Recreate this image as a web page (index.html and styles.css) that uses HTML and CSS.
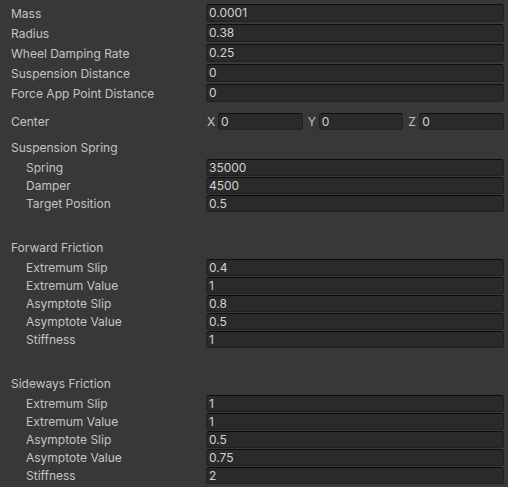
FILE: index.html
```html
<!DOCTYPE html>
<html>
<head>
<meta charset="utf-8">
<link rel="stylesheet" href="styles.css">
</head>
<body>
<div class="inspector">
  <div class="group top">
    <div class="row"><span class="label">Mass</span><div class="field">0.0001</div></div>
    <div class="row"><span class="label">Radius</span><div class="field">0.38</div></div>
    <div class="row"><span class="label">Wheel Damping Rate</span><div class="field">0.25</div></div>
    <div class="row"><span class="label">Suspension Distance</span><div class="field">0</div></div>
    <div class="row"><span class="label">Force App Point Distance</span><div class="field">0</div></div>
  </div>

  <div class="row vec-row">
    <span class="label">Center</span>
    <div class="vector">
      <div class="comp"><span class="axis">X</span><div class="field">0</div></div>
      <div class="comp"><span class="axis">Y</span><div class="field">0</div></div>
      <div class="comp"><span class="axis">Z</span><div class="field">0</div></div>
    </div>
  </div>

  <div class="section spring">
    <div class="header">Suspension Spring</div>
    <div class="sub"><span class="label">Spring</span><div class="field">35000</div></div>
    <div class="sub"><span class="label">Damper</span><div class="field">4500</div></div>
    <div class="sub"><span class="label">Target Position</span><div class="field">0.5</div></div>
  </div>

  <div class="section friction">
    <div class="header">Forward Friction</div>
    <div class="sub"><span class="label">Extremum Slip</span><div class="field">0.4</div></div>
    <div class="sub"><span class="label">Extremum Value</span><div class="field">1</div></div>
    <div class="sub"><span class="label">Asymptote Slip</span><div class="field">0.8</div></div>
    <div class="sub"><span class="label">Asymptote Value</span><div class="field">0.5</div></div>
    <div class="sub"><span class="label">Stiffness</span><div class="field">1</div></div>
  </div>

  <div class="section friction">
    <div class="header">Sideways Friction</div>
    <div class="sub"><span class="label">Extremum Slip</span><div class="field">1</div></div>
    <div class="sub"><span class="label">Extremum Value</span><div class="field">1</div></div>
    <div class="sub"><span class="label">Asymptote Slip</span><div class="field">0.5</div></div>
    <div class="sub"><span class="label">Asymptote Value</span><div class="field">0.75</div></div>
    <div class="sub"><span class="label">Stiffness</span><div class="field">2</div></div>
  </div>
</div>
</body>
</html>
```

FILE: styles.css
```css
html, body {
  margin: 0;
  padding: 0;
  background: #383838;
}

.inspector {
  font-family: Inter, "Noto Sans", sans-serif;
  font-size: 12px;
  color: #c4c4c4;
  padding: 3px 4px 0 11px;
  width: 508px;
  height: 487px;
  box-sizing: border-box;
  overflow: hidden;
}

.row {
  display: flex;
  align-items: center;
  height: 20px;
}

.label {
  width: 195px;
  flex: none;
  white-space: nowrap;
}

.field {
  flex: 1;
  height: 18px;
  box-sizing: border-box;
  background: #2a2a2a;
  border: 1px solid #212121;
  border-top-color: #0d0d0d;
  border-radius: 3px;
  color: #d2d2d2;
  padding: 0 2px;
  line-height: 16px;
  white-space: nowrap;
  overflow: hidden;
}

.vec-row {
  margin-top: 8px;
}

.vector {
  flex: 1;
  display: flex;
  gap: 4px;
}

.comp {
  flex: 1;
  display: flex;
  align-items: center;
}

.axis {
  width: 12px;
  flex: none;
  padding-left: 1px;
  box-sizing: border-box;
}

.comp .field {
  height: 17px;
  line-height: 15px;
}

.section .header {
  height: 18px;
  line-height: 18px;
  margin-bottom: 2px;
}

.spring {
  margin-top: 8px;
}

.friction {
  margin-top: 26px;
}

.sub {
  display: flex;
  align-items: flex-start;
  height: 18px;
}

.sub .label {
  width: 180px;
  padding-left: 15px;
  line-height: 18px;
}

.sub .field {
  height: 17px;
  line-height: 15px;
}
```
